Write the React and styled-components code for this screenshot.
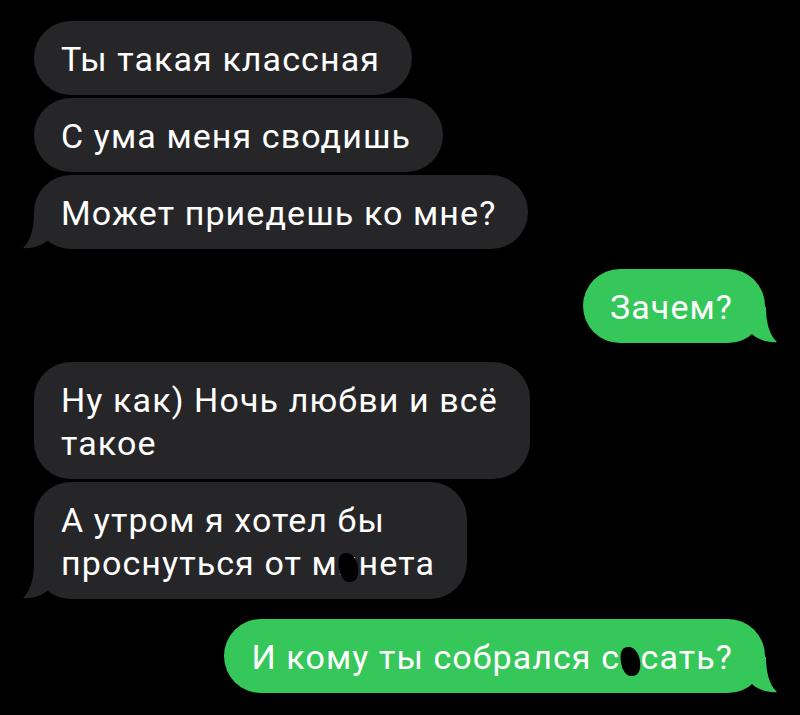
import React from 'react';
import styled, { createGlobalStyle } from 'styled-components';

const Global = createGlobalStyle`
  html, body {
    margin: 0;
    background: #000;
  }
`;

const Thread = styled.div`
  display: flex;
  flex-direction: column;
  padding: 21px 35px 0 34px;
  font-family: Roboto, "Liberation Sans", sans-serif;
`;

const Group = styled.div`
  display: flex;
  flex-direction: column;
  align-items: ${p => (p.$out ? 'flex-end' : 'flex-start')};
  gap: 3px;
  margin-bottom: ${p => (p.$out ? '19px' : '20px')};
`;

const Bubble = styled.div`
  position: relative;
  width: fit-content;
  padding: 17px 32px 14px 27px;
  border-radius: 37px;
  background: ${p => (p.$out ? '#35c759' : '#262628')};
  color: #fff;
  font-size: 34px;
  letter-spacing: 1.1px;
  line-height: 43px;
  white-space: nowrap;
`;

const Tail = styled.svg`
  position: absolute;
  bottom: 0;
  ${p => (p.$out ? 'right: -13px; transform: scaleX(-1);' : 'left: -12px;')}
  width: 30px;
  height: 36px;
`;

const Censor = styled.span`
  position: relative;
  &::after {
    content: '';
    position: absolute;
    left: 1px;
    right: 1px;
    top: 10px;
    bottom: 1px;
    background: #000;
    border-radius: 35% 55% 40% 50%;
    transform: rotate(-6deg);
  }
`;

const BubbleTail = ({ out }) => (
  <Tail $out={out} viewBox="0 0 30 36">
    <path
      d="M12 0 C12 14 9 28 1 35 C9 36 19 33 25 28 L30 22 L30 0 Z"
      fill={out ? '#35c759' : '#262628'}
    />
  </Tail>
);

const Msg = ({ out, tail, lines }) => (
  <Bubble $out={out}>
    {tail && <BubbleTail out={out} />}
    {lines.map((l, i) => (
      <React.Fragment key={i}>
        {i > 0 && <br />}
        {l}
      </React.Fragment>
    ))}
  </Bubble>
);

export default function App() {
  return (
    <>
      <Global />
      <Thread>
        <Group>
          <Msg lines={['Ты такая классная']} />
          <Msg lines={['С ума меня сводишь']} />
          <Msg tail lines={['Может приедешь ко мне?']} />
        </Group>
        <Group $out>
          <Msg out tail lines={['Зачем?']} />
        </Group>
        <Group>
          <Msg lines={['Ну как) Ночь любви и всё', 'такое']} />
          <Msg
            tail
            lines={[
              'А утром я хотел бы',
              <>проснуться от м<Censor>и</Censor>нета</>,
            ]}
          />
        </Group>
        <Group $out>
          <Msg
            out
            tail
            lines={[<>И кому ты собрался с<Censor>о</Censor>сать?</>]}
          />
        </Group>
      </Thread>
    </>
  );
}
